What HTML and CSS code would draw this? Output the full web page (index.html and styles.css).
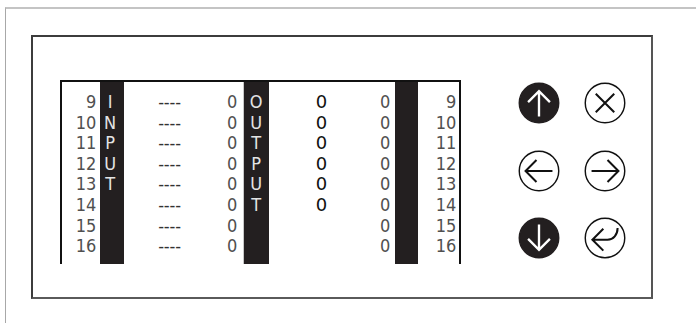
FILE: index.html
```html
<!DOCTYPE html>
<html lang="en">
<head>
  <meta charset="UTF-8">
  <title>IO Monitor</title>
  <link rel="stylesheet" href="styles.css">
</head>
<body>
  <div class="frame">
    <div class="panel">

      <div class="io-table">
        <div class="col num">
          <span>9</span><span>10</span><span>11</span><span>12</span>
          <span>13</span><span>14</span><span>15</span><span>16</span>
        </div>
        <div class="col band">
          <span>I</span><span>N</span><span>P</span><span>U</span><span>T</span>
        </div>
        <div class="col dashes">
          <span>----</span><span>----</span><span>----</span><span>----</span>
          <span>----</span><span>----</span><span>----</span><span>----</span>
        </div>
        <div class="col zeros">
          <span>0</span><span>0</span><span>0</span><span>0</span>
          <span>0</span><span>0</span><span>0</span><span>0</span>
        </div>
        <div class="col band out">
          <span>O</span><span>U</span><span>T</span><span>P</span><span>U</span><span>T</span>
        </div>
        <div class="col bold">
          <span>0</span><span>0</span><span>0</span><span>0</span><span>0</span><span>0</span>
        </div>
        <div class="col zeros2">
          <span>0</span><span>0</span><span>0</span><span>0</span>
          <span>0</span><span>0</span><span>0</span><span>0</span>
        </div>
        <div class="col band thin"></div>
        <div class="col num right">
          <span>9</span><span>10</span><span>11</span><span>12</span>
          <span>13</span><span>14</span><span>15</span><span>16</span>
        </div>
      </div>

      <div class="keys">
        <button class="key dark" title="Up">
          <svg viewBox="0 0 50 50"><circle cx="25" cy="25" r="23.5"/><path d="M25 41V11M12 24L25 11L38 24"/></svg>
        </button>
        <button class="key" title="Cancel">
          <svg viewBox="0 0 50 50"><circle cx="25" cy="25" r="23.5"/><path d="M14 14L36 36M36 14L14 36"/></svg>
        </button>
        <button class="key" title="Left">
          <svg viewBox="0 0 50 50"><circle cx="25" cy="25" r="23.5"/><path d="M9 25H41M22 12L9 25L22 38"/></svg>
        </button>
        <button class="key" title="Right">
          <svg viewBox="0 0 50 50"><circle cx="25" cy="25" r="23.5"/><path d="M41 25H9M28 12L41 25L28 38"/></svg>
        </button>
        <button class="key dark" title="Down">
          <svg viewBox="0 0 50 50"><circle cx="25" cy="25" r="23.5"/><path d="M25 9V39M12 26L25 39L38 26"/></svg>
        </button>
        <button class="key" title="Enter">
          <svg viewBox="0 0 50 50"><circle cx="25" cy="25" r="23.5"/><path d="M10 27H28C35 27 40 21 40 13M23 14L10 27L23 40"/></svg>
        </button>
      </div>

    </div>
  </div>
</body>
</html>
```
FILE: styles.css
```css
* {
  margin: 0;
  padding: 0;
  box-sizing: border-box;
}

body {
  background: #fff;
  overflow: hidden;
  font-family: "DejaVu Sans Condensed", "DejaVu Sans", sans-serif;
  font-stretch: condensed;
}

.frame {
  margin: 7px 0 0 5px;
  width: calc(100vw - 5px);
  height: calc(100vh - 7px);
  border-top: 2px solid #c4c4c4;
  border-left: 1px solid #a8a8a8;
  padding: 26px 0 0 25px;
}

.panel {
  width: 622px;
  height: 264px;
  border: 2px solid #3c3c3c;
  border-bottom-color: #5a5a5a;
  border-right-color: #555;
  padding: 43px 0 0 27px;
  display: flex;
  align-items: flex-start;
}

/* io table */
.io-table {
  width: 401px;
  height: 184px;
  border: 2px solid #111;
  border-bottom: none;
  display: flex;
}

.col {
  display: flex;
  flex-direction: column;
  padding: 10px 0 8px;
  font-size: 18px;
  line-height: 20.6px;
  letter-spacing: -0.2px;
  color: #505050;
}

.num {
  width: 38px;
  text-align: right;
  padding-right: 4px;
}

.num.right {
  width: 40px;
  padding-right: 2px;
}

.band {
  width: 24px;
  background: #231f20;
  color: #e4e4e4;
  text-align: center;
  padding-right: 4px;
}

.band.out {
  width: 25px;
  padding-right: 1px;
}

.band.thin {
  width: 23px;
}

.dashes {
  width: 91px;
  text-align: center;
  color: #333;
}

.zeros {
  width: 29px;
  text-align: right;
  padding-right: 6px;
  border-right: 1px solid #c8c8c8;
}

.bold {
  width: 105px;
  text-align: center;
  color: #111;
  font-family: "DejaVu Sans", sans-serif;
  font-stretch: normal;
}

.zeros2 {
  width: 21px;
  text-align: right;
  padding-right: 5px;
}

/* keypad */
.keys {
  margin: 2px 0 0 57px;
  display: grid;
  grid-template-columns: 42px 42px;
  column-gap: 24px;
  row-gap: 25.5px;
}

.key {
  width: 42px;
  height: 42px;
  border: none;
  background: none;
  cursor: pointer;
}

.key svg {
  display: block;
  width: 42px;
  height: 42px;
}

.key circle {
  fill: #fff;
  stroke: #111;
  stroke-width: 1.7;
}

.key path {
  fill: none;
  stroke: #111;
  stroke-width: 2.4;
}

.key.dark circle {
  fill: #231f20;
  stroke: #231f20;
}

.key.dark path {
  stroke: #fff;
  stroke-width: 2.8;
}
```
